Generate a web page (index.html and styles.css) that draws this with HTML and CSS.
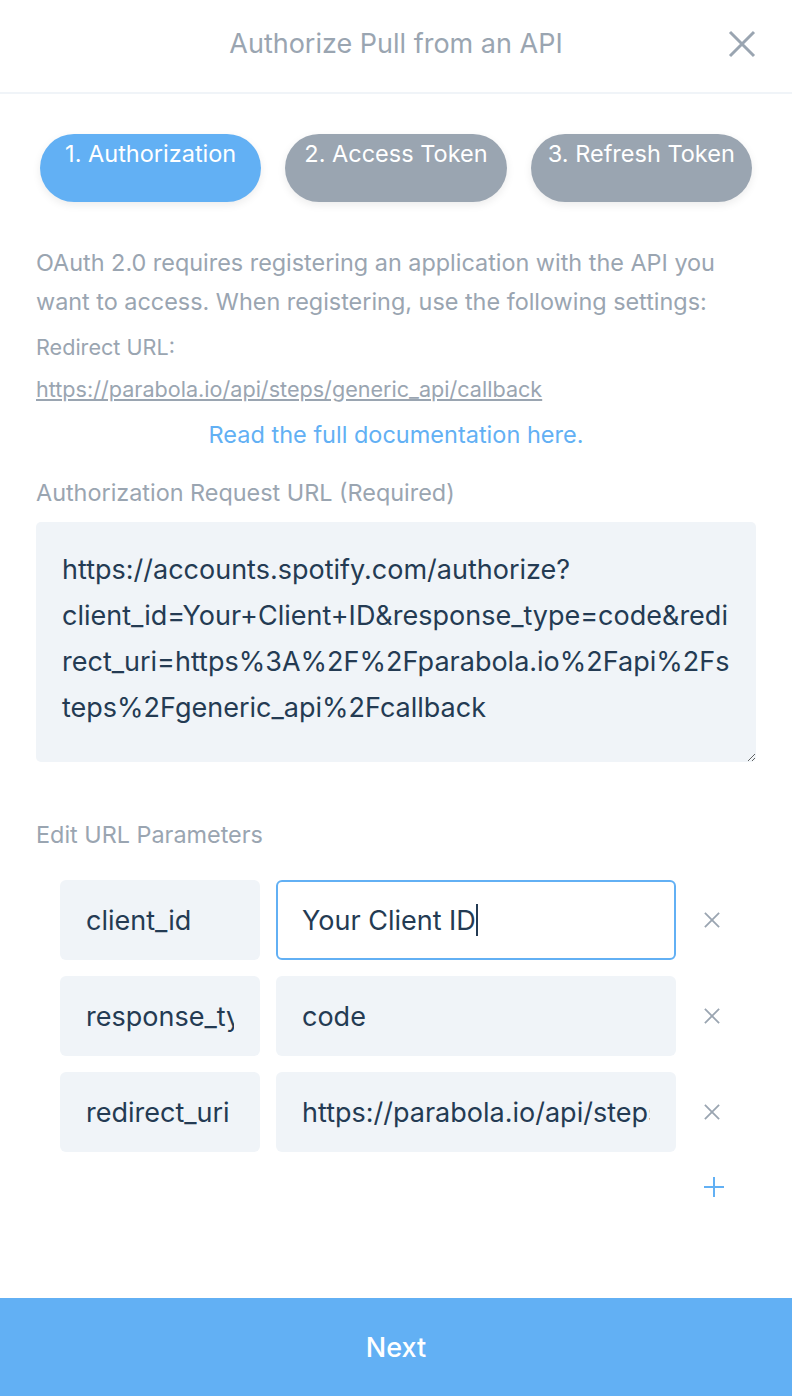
FILE: index.html
```html
<!DOCTYPE html>
<html>
<head>
<meta charset="utf-8">
<link rel="stylesheet" href="styles.css">
</head>
<body>
<div class="modal">
  <header class="header">
    <h1 class="title">Authorize Pull from an API</h1>
    <button class="close" aria-label="Close">
      <svg width="28" height="28" viewBox="0 0 28 28"><path d="M2 2 L26 26 M26 2 L2 26" stroke="#9aa5b1" stroke-width="3" fill="none"/></svg>
    </button>
  </header>
  <main class="content">
    <div class="steps">
      <div class="step active">1. Authorization</div>
      <div class="step">2. Access Token</div>
      <div class="step">3. Refresh Token</div>
    </div>
    <p class="intro">OAuth 2.0 requires registering an application with the API you want to access. When registering, use the following settings:</p>
    <div class="redirect-label">Redirect URL:</div>
    <div class="redirect-link"><a href="#">https://parabola.io/api/steps/generic_api/callback</a></div>
    <div class="doc-link"><a href="#">Read the full documentation here.</a></div>
    <label class="field-label">Authorization Request URL (Required)</label>
    <textarea class="url-area">https://accounts.spotify.com/authorize?client_id=Your+Client+ID&amp;response_type=code&amp;redirect_uri=https%3A%2F%2Fparabola.io%2Fapi%2Fsteps%2Fgeneric_api%2Fcallback</textarea>
    <div class="field-label params-label">Edit URL Parameters</div>
    <div class="params">
      <div class="param-row">
        <div class="box key"><span class="txt">client_id</span></div>
        <div class="box value focused"><span class="txt">Your Client ID<span class="caret"></span></span></div>
        <button class="remove"><svg width="18" height="18" viewBox="0 0 18 18"><path d="M1 1 L17 17 M17 1 L1 17" stroke="#9aa5b1" stroke-width="2" fill="none"/></svg></button>
      </div>
      <div class="param-row">
        <div class="box key"><span class="txt">response_type</span></div>
        <div class="box value"><span class="txt">code</span></div>
        <button class="remove"><svg width="18" height="18" viewBox="0 0 18 18"><path d="M1 1 L17 17 M17 1 L1 17" stroke="#9aa5b1" stroke-width="2" fill="none"/></svg></button>
      </div>
      <div class="param-row">
        <div class="box key"><span class="txt">redirect_uri</span></div>
        <div class="box value"><span class="txt">https://parabola.io/api/steps/generic_api/callback</span></div>
        <button class="remove"><svg width="18" height="18" viewBox="0 0 18 18"><path d="M1 1 L17 17 M17 1 L1 17" stroke="#9aa5b1" stroke-width="2" fill="none"/></svg></button>
      </div>
      <div class="add-row">
        <button class="add"><svg width="22" height="22" viewBox="0 0 22 22"><path d="M11 0 V22 M0 11 H22" stroke="#62b0f4" stroke-width="2.2" fill="none"/></svg></button>
      </div>
    </div>
  </main>
  <footer class="footer">
    <button class="next">Next</button>
  </footer>
</div>
</body>
</html>
```

FILE: styles.css
```css
* { box-sizing: border-box; }
html, body { margin: 0; padding: 0; background: #fff; }
body {
  font-family: Inter, "Noto Sans", "Liberation Sans", sans-serif;
  width: 792px;
  height: 1396px;
  overflow: hidden;
}
.modal {
  display: flex;
  flex-direction: column;
  height: 1396px;
}
.header {
  position: relative;
  height: 94px;
  border-bottom: 2px solid #f0f4f8;
  display: flex;
  align-items: center;
  justify-content: center;
  padding-bottom: 6px;
}
.title {
  margin: 0;
  font-size: 27px;
  font-weight: 400;
  color: #9aa5b1;
}
.close {
  position: absolute;
  right: 36px;
  top: 30px;
  background: none;
  border: 0;
  padding: 0;
  width: 28px;
  height: 28px;
  display: flex;
}
.content {
  flex: 1;
  padding: 40px 36px 0 36px;
}
.steps {
  display: flex;
  gap: 24px;
  padding: 0 4px;
}
.step {
  width: 222px;
  height: 68px;
  border-radius: 34px;
  background: #9aa5b1;
  color: #fff;
  font-size: 23.5px;
  text-align: center;
  padding-top: 5px;
  line-height: 30px;
  box-shadow: 0 3px 8px rgba(0, 0, 0, 0.08);
}
.step.active { background: #62b0f4; }
.intro {
  margin: 41px 0 0 0;
  font-size: 23.4px;
  line-height: 39px;
  color: #9aa5b1;
}
.redirect-label {
  margin-top: 4px;
  font-size: 21.6px;
  line-height: 44px;
  color: #9aa5b1;
}
.redirect-link {
  font-size: 21.6px;
  line-height: 40px;
}
.redirect-link a { color: #9aa5b1; text-decoration: underline; }
.doc-link {
  text-align: center;
  font-size: 23.5px;
  line-height: 52px;
}
.doc-link a { color: #62b0f4; text-decoration: none; }
.field-label {
  display: block;
  margin-top: 6px;
  font-size: 23.4px;
  line-height: 52px;
  color: #9aa5b1;
}
.url-area {
  display: block;
  width: 720px;
  height: 240px;
  margin-top: 3px;
  border: 0;
  border-radius: 5px;
  background: #f0f4f8;
  font-family: inherit;
  font-size: 27px;
  line-height: 46px;
  color: #243b53;
  padding: 25px 23px 20px 26px;
  resize: vertical;
  outline: none;
  overflow: hidden;
}
.params-label { margin-top: 47px; }
.params {
  margin-top: 19px;
  padding-left: 24px;
  display: flex;
  flex-direction: column;
  gap: 16px;
}
.param-row {
  display: flex;
  align-items: center;
  gap: 16px;
}
.box {
  height: 80px;
  border-radius: 6px;
  background: #f0f4f8;
  display: flex;
  align-items: center;
  padding: 0 26px;
  font-size: 27px;
  color: #243b53;
}
.box .txt {
  display: block;
  overflow: hidden;
  white-space: nowrap;
  width: 100%;
}
.key { width: 200px; }
.value { width: 400px; }
.value.focused {
  background: #fff;
  border: 2px solid #62b0f4;
  padding: 0 24px;
}
.caret {
  display: inline-block;
  width: 2px;
  height: 32px;
  background: #243b53;
  vertical-align: -6px;
}
.remove, .add {
  background: none;
  border: 0;
  padding: 0;
  display: flex;
}
.remove svg { width: 16px; height: 16px; }
.remove { margin-left: 12px; }
.add-row {
  display: flex;
  justify-content: flex-end;
  padding-right: 32px;
  margin-top: 9px;
}
.add svg { width: 20px; height: 20px; }
.footer { height: 98px; }
.next {
  width: 100%;
  height: 98px;
  border: 0;
  background: #62b0f4;
  color: #fff;
  font-family: inherit;
  font-size: 27px;
  font-weight: 500;
}
```
